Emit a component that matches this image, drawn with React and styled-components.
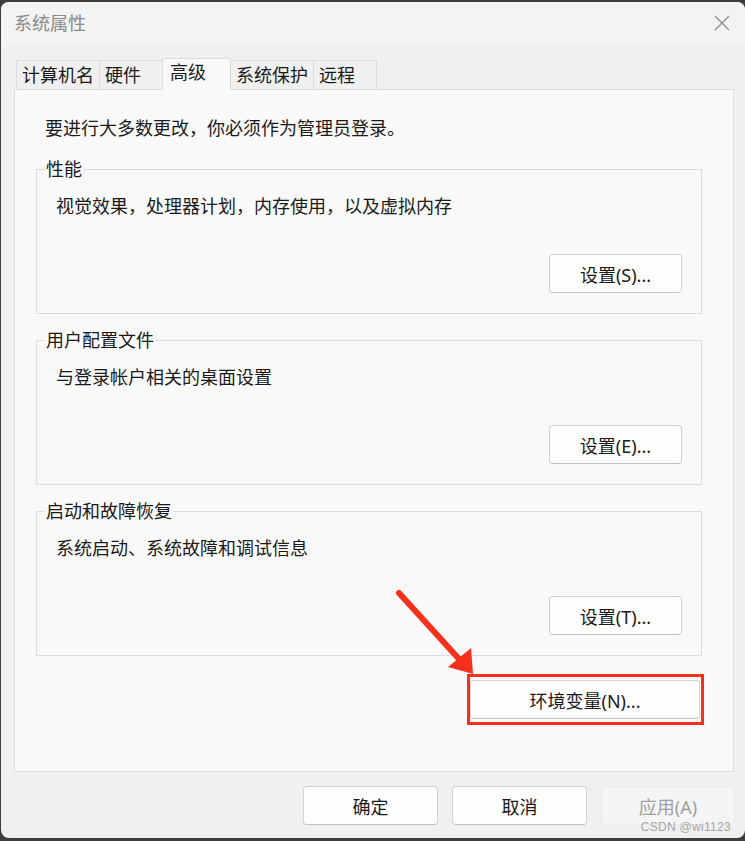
import React from 'react';
import styled, { createGlobalStyle } from 'styled-components';

const GlobalStyle = createGlobalStyle`
  html, body {
    margin: 0;
    padding: 0;
    background: #3d3d3d;
  }
  body {
    font-family: 'Noto Sans', 'Noto Sans CJK SC', sans-serif;
    color: #1a1a1a;
  }
`;

const Window = styled.div`
  position: relative;
  box-sizing: border-box;
  width: 744px;
  height: 836px;
  margin: 2px 0 0 1px;
  background: #f0f0f0;
  border-radius: 8px;
  display: flex;
  flex-direction: column;
  overflow: hidden;
`;

const TitleBar = styled.div`
  height: 44px;
  flex: none;
  display: flex;
  justify-content: space-between;
  align-items: flex-start;
  padding: 9px 14px 0 13px;
  box-sizing: border-box;
  background: #f3f3f3;
`;

const Title = styled.span`
  font-size: 18px;
  line-height: 24px;
  color: #8a8a8a;
`;

const CloseButton = styled.span`
  display: flex;
  align-items: center;
  justify-content: center;
  width: 16px;
  height: 24px;
  margin-right: 1px;
`;

const TabStrip = styled.div`
  display: flex;
  align-items: flex-end;
  margin-top: 12px;
  padding-left: 15px;
  flex: none;
`;

const Tab = styled.div`
  position: relative;
  box-sizing: border-box;
  min-width: ${(p) => (p.$active ? '69px' : '64px')};
  height: ${(p) => (p.$active ? '32px' : '29px')};
  margin: ${(p) => (p.$active ? '0 -1px -1px -1px' : '0')};
  padding: ${(p) => (p.$active ? '0 7px' : '0 5px')};
  font-size: 18px;
  line-height: ${(p) => (p.$active ? '27px' : '28px')};
  white-space: nowrap;
  background: ${(p) => (p.$active ? '#f9f9f9' : '#f0f0f0')};
  border: 1px solid #dcdcdc;
  border-bottom: none;
  border-right: ${(p) => (p.$last || p.$active ? '1px solid #dcdcdc' : 'none')};
  z-index: ${(p) => (p.$active ? 1 : 0)};
`;

const Panel = styled.div`
  flex: none;
  box-sizing: border-box;
  height: 683px;
  margin: 0 11px 0 13px;
  padding: 27px 31px 0 21px;
  background: #f9f9f9;
  border: 1px solid #dcdcdc;
  display: flex;
  flex-direction: column;
`;

const Intro = styled.p`
  margin: 0;
  padding-left: 9px;
  font-size: 18px;
  line-height: 22px;
`;

const Group = styled.fieldset`
  margin: ${(p) => (p.$first ? '19px' : '15px')} 0 0 0;
  padding: 15px 19px 20px 19px;
  border: 1px solid #dcdcdc;
  min-width: 0;
  display: flex;
  flex-direction: column;
`;

const GroupTitle = styled.legend`
  margin-left: -11px;
  padding: 0 1px;
  font-size: 18px;
  line-height: 22px;
`;

const Description = styled.div`
  font-size: 18px;
  line-height: 22px;
`;

const ButtonRow = styled.div`
  display: flex;
  justify-content: flex-end;
  margin-top: ${(p) => p.$top || '0'};
  margin-right: ${(p) => p.$right || '0'};
`;

const Button = styled.button`
  box-sizing: border-box;
  width: ${(p) => p.$width || '133px'};
  height: 39px;
  padding: 0;
  font-family: inherit;
  font-size: 18px;
  color: ${(p) => (p.disabled ? '#a0a0a0' : '#1a1a1a')};
  background: ${(p) => (p.disabled ? '#f5f5f5' : '#fdfdfd')};
  border: 1px solid ${(p) => (p.disabled ? '#ebebeb' : '#d2d2d2')};
  border-bottom-color: ${(p) => (p.disabled ? '#ebebeb' : '#c2c2c2')};
  border-radius: 4px;
`;

const Highlight = styled.div`
  position: relative;
  padding: 3px 1px 3px 0;
  border: 3px solid #f5301c;
`;

const Arrow = styled.svg`
  position: absolute;
  left: -75px;
  top: -88px;
  width: 80px;
  height: 90px;
  overflow: visible;
`;

const Footer = styled.div`
  display: flex;
  justify-content: flex-end;
  gap: 14px;
  padding: 14px 10px 0 0;
`;

const Watermark = styled.span`
  position: absolute;
  right: 14px;
  bottom: 4px;
  font-family: 'Liberation Sans', sans-serif;
  font-size: 12px;
  color: #a6a6a6;
  letter-spacing: 0.3px;
`;

const tabs = ['计算机名', '硬件', '高级', '系统保护', '远程'];

const groups = [
  { title: '性能', text: '视觉效果，处理器计划，内存使用，以及虚拟内存', button: '设置(S)...' },
  { title: '用户配置文件', text: '与登录帐户相关的桌面设置', button: '设置(E)...' },
  { title: '启动和故障恢复', text: '系统启动、系统故障和调试信息', button: '设置(T)...' },
];

const App = () => {
  return (
    <>
      <GlobalStyle />
      <Window>
        <TitleBar>
          <Title>系统属性</Title>
          <CloseButton>
            <svg width="16" height="16" viewBox="0 0 16 16">
              <path d="M1 1 L15 15 M15 1 L1 15" stroke="#8a8a8a" strokeWidth="1.2" fill="none" />
            </svg>
          </CloseButton>
        </TitleBar>
        <TabStrip>
          {tabs.map((t, i) => (
            <Tab key={t} $active={t === '高级'} $last={i === tabs.length - 1}>
              {t}
            </Tab>
          ))}
        </TabStrip>
        <Panel>
          <Intro>要进行大多数更改，你必须作为管理员登录。</Intro>
          {groups.map((g, i) => (
            <Group key={g.title} $first={i === 0}>
              <GroupTitle>{g.title}</GroupTitle>
              <Description>{g.text}</Description>
              <ButtonRow $top="37px">
                <Button>{g.button}</Button>
              </ButtonRow>
            </Group>
          ))}
          <ButtonRow $top="18px" $right="-2px">
            <Highlight>
              <Arrow viewBox="0 0 80 90">
                <path d="M4 4 L64 70" stroke="#f5301c" strokeWidth="6" strokeLinecap="round" fill="none" />
                <path d="M53 78 L78 85 L76 59 Z" fill="#f5301c" />
              </Arrow>
              <Button $width="230px">环境变量(N)...</Button>
            </Highlight>
          </ButtonRow>
        </Panel>
        <Footer>
          <Button $width="135px">确定</Button>
          <Button $width="135px">取消</Button>
          <Button $width="134px" disabled>应用(A)</Button>
        </Footer>
        <Watermark>CSDN @wi1123</Watermark>
      </Window>
    </>
  );
};

export default App;
